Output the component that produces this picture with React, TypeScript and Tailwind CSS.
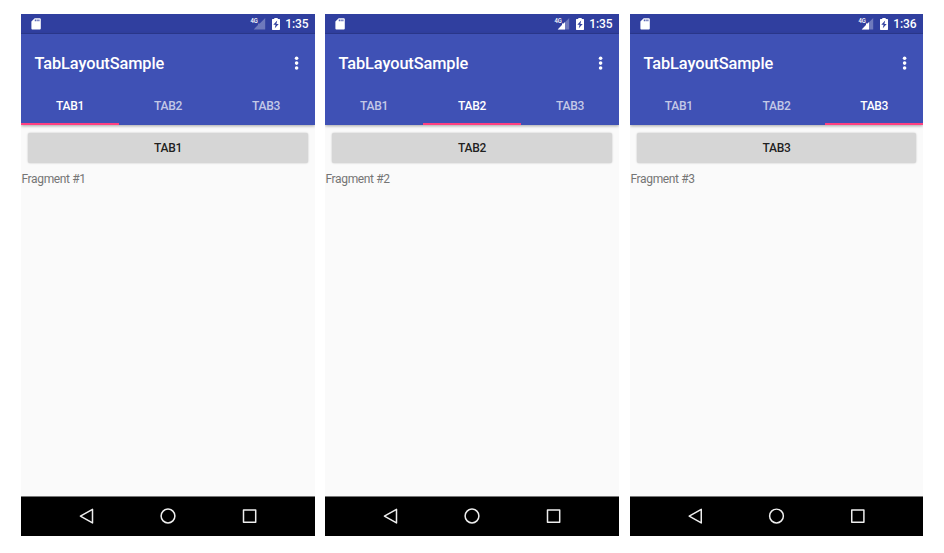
import clsx from "clsx";

type PhoneProps = {
  active: number;
  time: string;
  weakSignal?: boolean;
  className: string;
};

const TABS = ["TAB1", "TAB2", "TAB3"];

function SdCardIcon() {
  return (
    <svg width="10" height="12" viewBox="0 0 10 12">
      <path
        fillRule="evenodd"
        fill="#fff"
        d="M3.7 0.2H8.8Q9.8 0.2 9.8 1.2V10.6Q9.8 11.6 8.8 11.6H1.3Q0.4 11.6 0.4 10.6V3.6ZM3.8 1.6V3.2H4.8V1.6ZM5.6 1.6V3.2H6.6V1.6ZM7.4 1.6V3.2H8.4V1.6Z"
      />
    </svg>
  );
}

function SignalIcon({ weak }: { weak?: boolean }) {
  return (
    <svg width="16" height="13" viewBox="0 0 16 13">
      <path d="M15.2 0.9V12.4H3.7L8 8.1V6.4H9.7Z" fill="#fff" fillOpacity="0.3" />
      {!weak && <path d="M11 5.1V12.4H3.7L8 8.1V6.4H9.7Z" fill="#fff" />}
      <text x="0.4" y="6" fontSize="6.5" fontWeight="500" fill="#fff" textLength="7.4" lengthAdjust="spacingAndGlyphs">
        4G
      </text>
    </svg>
  );
}

function BatteryIcon() {
  return (
    <svg width="8" height="12" viewBox="0 0 8 12">
      <path
        fillRule="evenodd"
        fill="#fff"
        d="M2.3 0H5.7V1H7.4Q8 1 8 1.7V11.3Q8 12 7.4 12H0.6Q0 12 0 11.3V1.7Q0 1 0.6 1H2.3ZM5.2 2.6L1.3 6.8H3.6L2.8 10.2L6.7 5.9H4.4Z"
      />
    </svg>
  );
}

function Phone({ active, time, weakSignal, className }: PhoneProps) {
  return (
    <div className={clsx("flex h-[522px] flex-col overflow-hidden bg-[#fafafa]", className)}>
      <div className="flex h-5 items-center border-b border-[#2c3a92] bg-[#303f9f] pr-[6.5px] pl-[10px]">
        <SdCardIcon />
        <div className="ml-auto flex items-center">
          <SignalIcon weak={weakSignal} />
          <span className="ml-[6px]">
            <BatteryIcon />
          </span>
          <span className="ml-[5px] pt-px text-[12px] leading-5 font-medium tracking-[-0.1px] text-white">{time}</span>
        </div>
      </div>

      <div className="z-10 h-[91px] shrink-0 bg-[#3f51b5] shadow-[0_1px_3px_rgba(0,0,0,0.35)]">
        <div className="flex h-[58px] items-center justify-between pr-[16px] pl-[13.5px]">
          <h1 className="pt-[2px] text-[16.33px] leading-5 font-medium tracking-[-0.09px] text-white">TabLayoutSample</h1>
          <svg width="5" height="16" viewBox="0 0 5 16" fill="#fff">
            <circle cx="2.6" cy="3.2" r="1.8" />
            <circle cx="2.6" cy="8.1" r="1.8" />
            <circle cx="2.6" cy="13" r="1.8" />
          </svg>
        </div>
        <div className="grid h-[33px] grid-cols-3">
          {TABS.map((tab, i) => (
            <div
              key={tab}
              className={clsx(
                "border-b-2 pt-[4px] text-center text-[12px] leading-5 font-medium tracking-[-0.3px]",
                i === active ? "border-[#ff4081] text-white" : "border-transparent text-white/70",
              )}
            >
              {tab}
            </div>
          ))}
        </div>
      </div>

      <div className="flex-1">
        <div className="mx-[7px] mt-[8px] h-[30px] rounded-[2px] bg-[#d6d6d6] text-center text-[12px] leading-[31px] font-medium tracking-[-0.3px] text-black/87 shadow-[0_0_2px_rgba(0,0,0,0.25)]">
          {TABS[active]}
        </div>
        <p className="mt-[6px] pl-[0.5px] text-[12px] leading-5 tracking-[-0.36px] text-[#757575]">Fragment #{active + 1}</p>
      </div>

      <div className="flex h-10 items-center border-t border-[#777] bg-black">
        <svg className="w-full" height="39" viewBox="0 0 294 39" fill="none" stroke="#eee" strokeWidth="1.5" strokeLinejoin="round">
          <path d="M71.5 12.3V25.9L59.4 19.1Z" />
          <circle cx="147" cy="19" r="6.9" />
          <rect x="222.5" y="13" width="12.2" height="12.3" />
        </svg>
      </div>
    </div>
  );
}

export default function App() {
  return (
    <div className="flex h-[553px] w-[944px] bg-white pt-[14px] pl-[21px] font-[Roboto,sans-serif]">
      <Phone active={0} time="1:35" weakSignal className="w-[294px]" />
      <Phone active={1} time="1:35" className="ml-[10px] w-[294px]" />
      <Phone active={2} time="1:36" className="ml-[11px] w-[293px]" />
    </div>
  );
}
